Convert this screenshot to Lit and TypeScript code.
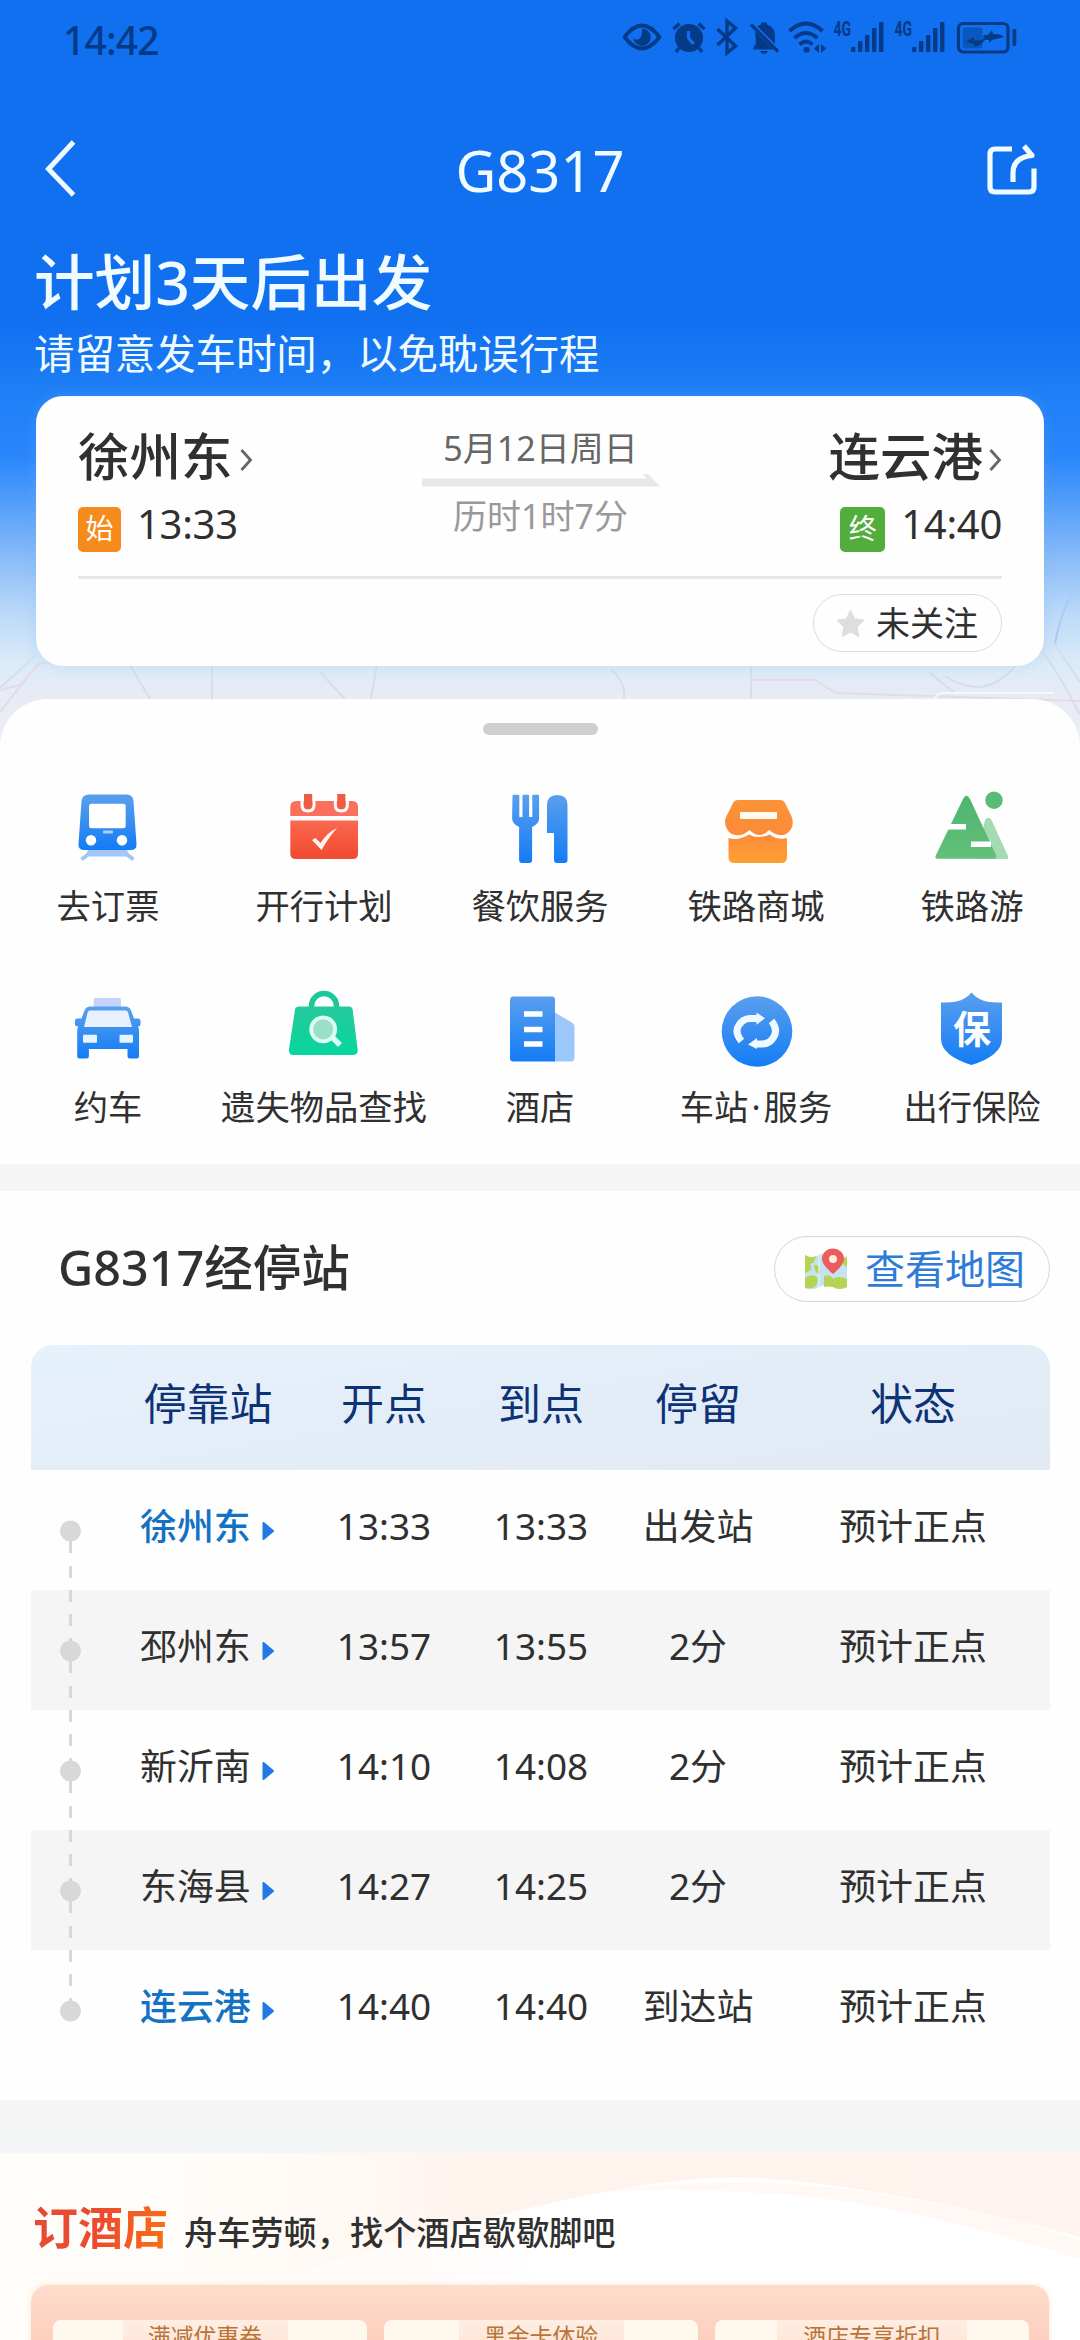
import { LitElement, html, css, svg } from "lit";
import { customElement } from "lit/decorators.js";
import { classMap } from "lit/directives/class-map.js";

interface Stop {
  name: string;
  depart: string;
  arrive: string;
  stay: string;
  status: string;
  terminal?: boolean;
}

const STOPS: Stop[] = [
  { name: "徐州东", depart: "13:33", arrive: "13:33", stay: "出发站", status: "预计正点", terminal: true },
  { name: "邳州东", depart: "13:57", arrive: "13:55", stay: "2分", status: "预计正点" },
  { name: "新沂南", depart: "14:10", arrive: "14:08", stay: "2分", status: "预计正点" },
  { name: "东海县", depart: "14:27", arrive: "14:25", stay: "2分", status: "预计正点" },
  { name: "连云港", depart: "14:40", arrive: "14:40", stay: "到达站", status: "预计正点", terminal: true },
];

const ICONS = {
  train: svg`
    <path d="M92 851.500 L81.500 859.500 M123 851.500 L133.500 859.500" stroke="#a3c6f8" stroke-width="4" fill="none"/>
    <path d="M88 850h39l3 6.500H85z" fill="#a3c6f8"/>
    <path d="M89 794.500h37.500q6.500 0 7 6.500l3 43q.4 6-6 6h-46q-6.500 0-6-6l3-43q.5-6.500 7.500-6.500z" fill="url(#blue)"/>
    <rect x="89" y="803.700" width="36.700" height="24.500" rx="2.500" fill="#fff"/>
    <circle cx="91" cy="840.300" r="5.200" fill="#fff"/><circle cx="122" cy="840.300" r="5.200" fill="#fff"/>
    <rect x="103" y="830.500" width="10" height="3" rx="1" fill="#a9d2fb"/>`,
  calendar: svg`
    <path d="M290.300 816v-9q0-6 6-6h55.700q6 0 6 6v9z" fill="#fb6f5c"/>
    <path d="M290.300 820.500h67.700v33q0 5.500-5.500 5.500h-56.700q-5.500 0-5.500-5.500z" fill="url(#red)"/>
    <path d="M302 798v7q0 6 6 6t6-6v-7M335.300 798v7q0 6 6 6t6-6v-7" fill="none" stroke="#fff" stroke-width="3"/>
    <path d="M304 794h8.200v11q0 4-4 4t-4.200-4zM337.200 794h8.200v11q0 4-4 4t-4.200-4z" fill="#ee5c48"/>
    <path d="M312 840l3.500-2 5 5q6-10 16.500-15-8 9-15.500 22z" fill="#fff3ee"/>`,
  dining: svg`
    <path d="M512.500 796q0-1.200 1.200-1.200h4.400q1.200 0 1.200 1.200v21h3.200v-21q0-1.200 1.200-1.200h4.200q1.200 0 1.200 1.200v21h3.200v-21q0-1.200 1.200-1.200h4.400q1.200 0 1.200 1.200v22q0 6-7 9v33q0 3-3 3h-7q-3 0-3-3v-33q-7-3-7-9z" fill="url(#blue)"/>
    <path d="M547 805.200q0-10.300 10.250-10.300t10.250 10.300v54.800q0 3-3 3h-7.500q-3 0-3-3v-27h-7z" fill="url(#blue)"/>`,
  shop: svg`
    <path d="M738 800h42q3.500 0 5 3l6 12q3.500 8 0 14-4 7-12 6-4-.5-10-5-3.500 4.500-9.500 5-5 0-10-5-5 4.500-9.500 5-9 1.500-13-6-4-7 0-14l6-12q1.500-3 5-3z" fill="url(#orange)"/>
    <rect x="740" y="812" width="37" height="7" rx="1" fill="#fffaf2"/>
    <path d="M728.500 838q10 3 20.500-3.500 9 5 20.500 0 8 6 17.500 3.500v19q0 6-6 6h-46.500q-6 0-6-6z" fill="url(#orange2)"/>`,
  mountain: svg`
    <path d="M985 820q3.500-4.500 6.500 0l16.500 36q1 3-2 3H976z" fill="#a5dbb2"/>
    <path d="M963 799q3.500-6.500 7 0l26 56q1.500 3.800-2 3.800h-56q-4 0-2-3.800z" fill="url(#green)"/>
    <rect x="945" y="824" width="21" height="5.500" fill="#fff"/><rect x="971" y="841.500" width="20" height="5.500" fill="#fff"/>
    <circle cx="994" cy="800.200" r="8.700" fill="#59bb75"/>`,
  car: svg`
    <rect x="93.700" y="998" width="27.300" height="9" rx="1.500" fill="#c4d3fa"/>
    <path d="M75 1021q0-2.500 2.500-2.500h4l3-8q1.500-4 6-4H125q4.500 0 6 4l3 8h4q2.500 0 2.500 2.500v3q0 2.500-2.500 2.500l1 3V1056q0 2.500-2.500 2.500h-6.500q-2.500 0-2.500-2.500v-7H88.900v7q0 2.500-2.500 2.500h-6.700q-2.500 0-2.500-2.500v-26.500l1-3q-3.200 0-3.200-2.500z" fill="url(#blue)"/>
    <path d="M90 1010.500h35.500q2 0 2.600 2l3.900 14.500H84l3.600-14.500q.6-2 2.400-2z" fill="#e8f1fd"/>
    <rect x="83" y="1034.700" width="14" height="8" rx="1" fill="#e6f4fd"/><rect x="119.500" y="1034.700" width="13.500" height="8" rx="1" fill="#e6f4fd"/>`,
  bag: svg`
    <path d="M311.500 1008v-2a12.500 12.500 0 0 1 25 0v2" fill="none" stroke="#1cc89a" stroke-width="5.500"/>
    <path d="M299 1006.500h50q3 0 3.600 3l5 40q.6 5.500-4.600 5.500H293.500q-5 0-4.500-5.500l6-40q.8-3 4-3z" fill="url(#teal)"/>
    <path d="M331 1036l9 9" stroke="#dcfff4" stroke-width="5.500"/>
    <circle cx="323.200" cy="1029.300" r="12" fill="#9be0c6" stroke="#dcfff4" stroke-width="3.800"/>`,
  hotel: svg`
    <path d="M554 1012l17 10q3.500 2 3.500 5v31q0 3.500-3.500 3.500H554z" fill="#9cc7fb"/>
    <path d="M513.500 996.500h38.500q3 0 3 3v62h-41.500q-3.500 0-3.500-3.500v-58q0-3.500 3.500-3.500z" fill="url(#blue)"/>
    <path d="M524 1014h18.500M524 1029.500h18.500M524 1044h18.500" stroke="#fff" stroke-width="5.300"/>`,
  station: svg`
    <circle cx="757" cy="1031.500" r="35.300" fill="url(#blue)"/>
    <path d="M741.500 1041Q734 1032 739 1025q4.500-6.500 11-6.500h8M771.500 1021q6.500 8 2.500 15.500-4 7.500-11.500 7.500h-7" fill="none" stroke="#effaff" stroke-width="7"/>
    <path d="M756.500 1012.500l8.500 5.700-8.500 6.500zM757 1038l-9 6.500 9 4.500z" fill="#effaff"/>`,
  shield: svg`
    <path d="M971.500 992.500q6 7 15 9 5 1 15.500 1v36q0 17-30.500 26.500-30.500-9.500-30.500-26.500v-36q10.500 0 15.500-1 9-2 15-9z" fill="url(#blue)"/>
    <text x="972" y="1043" class="shield-text" text-anchor="middle">保</text>`,
};

const SERVICES: { icon: unknown; label: unknown; x: number; y: number }[] = [
  { icon: ICONS.train, label: "去订票", x: 64, y: 784 },
  { icon: ICONS.calendar, label: "开行计划", x: 280, y: 784 },
  { icon: ICONS.dining, label: "餐饮服务", x: 496, y: 784 },
  { icon: ICONS.shop, label: "铁路商城", x: 712, y: 784 },
  { icon: ICONS.mountain, label: "铁路游", x: 928, y: 784 },
  { icon: ICONS.car, label: "约车", x: 64, y: 985 },
  { icon: ICONS.bag, label: "遗失物品查找", x: 280, y: 985 },
  { icon: ICONS.hotel, label: "酒店", x: 496, y: 985 },
  { icon: ICONS.station, label: html`车站<span class="dot">·</span>服务`, x: 712, y: 985 },
  { icon: ICONS.shield, label: "出行保险", x: 928, y: 985 },
];

const OFFERS = [
  { label: "满减优惠券", tab: 165 },
  { label: "黑金卡体验", tab: 165 },
  { label: "酒店专享折扣", tab: 190 },
];

@customElement("app-root")
export class AppRoot extends LitElement {
  static styles = css`
    :host {
      display: block;
      width: 1080px;
      height: 2340px;
      overflow: hidden;
      background: #fefefe;
      color: #303030;
      font-family: "Noto Sans", "Noto Sans CJK SC", sans-serif;
    }
    * { box-sizing: border-box; }
    svg { display: block; flex: none; }
    .defs { position: absolute; width: 0; height: 0; }
    .hero {
      position: relative;
      height: 745px;
      color: #f0fbff;
      background: linear-gradient(180deg, #1070f0 0, #1070f0 325px, #2080f7 395px, #2986fc 455px, #559ffa 505px, #8bbdf8 560px, #bcdaf9 615px, #dcebf9 665px, #e9ebf4 700px, #edf0f4 745px);
    }
    .map-lines { position: absolute; left: 0; top: 540px; }
    .status { position: relative; display: flex; justify-content: space-between; height: 80px; padding: 0 60px 0 63px; color: #053a86; }
    .clock { font-size: 39px; line-height: 80px; font-weight: 500; letter-spacing: -0.8px; }
    .status-icons { margin-top: 16px; }
    .status-icons text { font: 700 20px/1 "Roboto", sans-serif; fill: #053a86; }
    .nav { position: relative; display: flex; align-items: center; justify-content: space-between; height: 180px; padding: 0 43px; }
    .nav-title { font-size: 56px; line-height: 60px; }
    .headline { position: relative; margin-top: -13px; padding-left: 34px; font-size: 60.600px; line-height: 70px; font-weight: 500; }
    .notice { position: relative; padding-left: 34px; margin-top: 10px; height: 69px; font-size: 40.400px; line-height: 54px; }
    .trip { position: relative; width: 1008px; height: 270px; margin: 0 auto; padding: 0 42px; border-radius: 27px; background: #fefefe; color: #303030; box-shadow: 0 0 14px rgba(120,180,245,.25); }
    .trip-main { display: flex; justify-content: space-between; height: 183px; border-bottom: 3px solid #e7e7e7; padding-top: 30px; }
    .end { display: flex; flex-direction: column; align-items: flex-start; }
    .end.right { align-items: flex-end; }
    .place { display: flex; align-items: center; gap: 7px; font-size: 51.500px; line-height: 60px; font-weight: 500; }
    .right .place { gap: 6px; }
    .place svg { margin-top: 8px; }
    .when { display: flex; gap: 16px; margin-top: 17px; font-size: 40px; line-height: 42px; }
    .when span { letter-spacing: -0.3px; }
    .when b { width: 43px; height: 45px; margin-top: 4px; border-radius: 5px; background: #f58b1c; color: #fff; font-size: 28px; line-height: 43px; font-weight: 400; text-align: center; }
    .when b.final { background: #53ad3d; width: 45px; }
    .mid { display: flex; flex-direction: column; align-items: center; width: 240px; font-size: 34px; line-height: 44px; color: #666; }
    .mid svg { margin: 4px 0 7px; }
    .mid .duration { color: #999; }
    .trip-foot { display: flex; justify-content: flex-end; padding-top: 15px; }
    .follow { display: flex; align-items: center; gap: 11px; width: 189px; height: 58px; padding-left: 22px; border: 1.500px solid #dcdcdc; border-radius: 29px; font-size: 34px; line-height: 54px; }
    .sheet { position: relative; height: 465px; margin-top: -46px; padding-top: 24px; border-radius: 48px 48px 0 0; background: #fefefe; }
    .handle { width: 115px; height: 12px; margin: 0 auto; border-radius: 6px; background: #cfcfcf; }
    .services { display: grid; grid-template-columns: repeat(5, 216px); grid-auto-rows: 201px; margin-top: 49px; }
    .service { display: flex; flex-direction: column; align-items: center; gap: 12px; font-size: 34.300px; line-height: 44px; white-space: nowrap; }
    .dot { padding: 0 3px; }
    .shield-text { font: 700 38px "Noto Sans CJK SC", sans-serif; fill: #fff; }
    .band { height: 27px; background: #f5f5f5; }
    .route { height: 909px; padding: 45px 30px 0 31px; background: #fefefe; }
    .route-head { display: flex; justify-content: space-between; height: 109px; padding-left: 27px; }
    .route-title { margin-top: -1px; font-size: 48.500px; line-height: 64px; font-weight: 500; }
    .map-button { display: flex; align-items: center; gap: 17px; width: 276px; height: 66px; padding-left: 29px; border: 1.500px solid #c3dcf0; border-radius: 33px; color: #2e7cd8; font-size: 40px; line-height: 60px; }
    .row { display: grid; grid-template-columns: 98px 158px 194px 120px 194px 236px; height: 120px; line-height: 112px; font-size: 36.900px; text-align: center; }
    .row:nth-child(odd) { background: #f5f5f5; }
    .row.header { height: 125px; border-radius: 22px 22px 0 0; background: linear-gradient(170deg, #e6f2fb 0%, #e3edf7 50%, #e1e9f5 100%); color: #0d3276; font-size: 43px; line-height: 118px; }
    .name { display: flex; align-items: center; gap: 11px; height: 112px; padding-left: 11px; }
    .name svg { margin-top: 9px; }
    .terminal .name { color: #1472c4; font-weight: 500; }
    .track { width: 79px; }
    .band.tall { height: 53px; background: linear-gradient(180deg, #f5f5f5, #f4f6f7); }
    .hotel { position: relative; height: 187px; padding: 45px 31px 0; background: #fffdf9; }
    .swoosh { position: absolute; left: 0; top: 0; }
    .hotel-head { position: relative; display: flex; align-items: center; gap: 16px; height: 87px; padding: 0 0 28px 2px; }
    .hotel-title { font-size: 45px; line-height: 58px; font-weight: 700; color: transparent; background: linear-gradient(100deg, #e44b35 0%, #ec4b2e 50%, #fa7313 100%); -webkit-background-clip: text; background-clip: text; }
    .hotel-sub { padding-top: 11px; font-size: 33.200px; line-height: 48px; font-weight: 500; }
    .offers { position: relative; display: grid; grid-template-columns: repeat(3, 314px); gap: 17px; height: 80px; padding: 35px 22px 0; border-radius: 17px 17px 0 0; background: linear-gradient(180deg, #fddccb, #fdc9b8); box-shadow: 0 0 6px #fde7d9; }
    .offer { display: flex; justify-content: center; height: 45px; border-radius: 8px 8px 0 0; background: #fff8ed; color: #b87437; font-size: 22.900px; line-height: 33px; }
    .offer:first-child { padding-right: 10px; }
    .offer-tab { text-align: center; background: linear-gradient(180deg, #ffeee3, #fddfce); }
  `;

  private defs() {
    const grad = (id: string, a: string, b: string) => svg`
      <linearGradient id=${id} x1="0" y1="0" x2="0" y2="1"><stop offset="0" stop-color=${a}/><stop offset="1" stop-color=${b}/></linearGradient>`;
    return html`<svg class="defs"><defs>
      ${grad("blue", "#5a9fee", "#137cf5")}
      ${grad("red", "#fb6850", "#f04a30")}
      ${grad("orange", "#fb9338", "#fd8a38")}
      ${grad("orange2", "#fc8b38", "#ffa032")}
      ${grad("green", "#4fb56f", "#63c07a")}
      ${grad("teal", "#27c99c", "#06d69c")}
    </defs></svg>`;
  }

  private statusIcons() {
    const bars = (x: number) => [0, 1, 2, 3, 4].map(
      (i) => svg`<rect x=${x + i * 7} y=${[47, 41, 35, 28, 22][i]} width="4.400" height=${[5, 11, 17, 24, 30][i]} rx="1"/>`,
    );
    return html`<svg class="status-icons" width="400" height="44" viewBox="620 16 400 44" fill="#053a86">
      <path d="M624.500 37Q642 14 659.500 37 642 60 624.500 37z" fill="none" stroke="#053a86" stroke-width="3.800" stroke-linejoin="round"/>
      <path d="M642 28.500a8.700 8.700 0 1 1-8.700 8.700q1.500 3.500 5 2 4.500-2 3.700-10.700z"/>
      <circle cx="689" cy="38" r="14"/><path d="M673.500 29l6-5.500M704.500 29l-6-5.500M679 48l-3 4M699 48l3 4" stroke="#053a86" stroke-width="3.400"/>
      <path d="M688.500 31v7l5 6" stroke="#1070f0" stroke-width="3.200" fill="none"/>
      <path d="M717.500 29l18 17-8.500 7V21l8.500 7-18 17" fill="none" stroke="#053a86" stroke-width="3.400"/>
      <path d="M755 30q1-4 6-5.500v-2h6v2q8 2.500 8 12v8l3 5h-25l1-3 2-3z"/><path d="M760 51h8l-2 2.500h-4z"/>
      <path d="M752.500 25l27 27" stroke="#1070f0" stroke-width="5"/><path d="M751 24.500L778 51.500" stroke="#053a86" stroke-width="3.200"/>
      <path d="M789.500 31q16.500-15 33 0M794.500 38q11.500-10 23 0M799.500 44.500q6.500-6 13 0" fill="none" stroke="#053a86" stroke-width="4"/>
      <rect x="803.500" y="47" width="6" height="5.500" rx="2"/><path d="M819 44v9l-5-4.500zM821 44v9l5-4.500z"/>
      <text x="833.500" y="36" textLength="17.500" lengthAdjust="spacingAndGlyphs">4G</text>${bars(851)}
      <text x="894.500" y="36" textLength="17.500" lengthAdjust="spacingAndGlyphs">4G</text>${bars(912)}
      <rect x="958.500" y="23.500" width="49.500" height="28.500" rx="5" fill="none" stroke="#053a86" stroke-width="3.200"/>
      <rect x="962.500" y="27.500" width="20" height="21" rx="2" opacity=".45"/>
      <rect x="1012.500" y="29" width="3.800" height="17" rx="1.500"/>
      <path d="M966 42l8-5v3.500h7l4-3h-2l1-2.500h4l4-5 1 4 7 .5 4 2.500-12 3-3 3v-3h-4l-5 5-6 2v-3z"/>
    </svg>`;
  }

  private chevron() {
    return html`<svg width="13" height="24" viewBox="0 0 13 24"><path d="M1.500 2l9 10-9 10" fill="none" stroke="#666" stroke-width="2.800"/></svg>`;
  }

  private hero() {
    return html`<header class="hero">
      <svg class="map-lines" width="1080" height="205" viewBox="0 540 1080 205" fill="none" stroke-width="2">
        <path d="M0 688L36 655M0 712l38-48 60-12M130 665l20 34M212 665v34M320 672l25 27M377 665l-6 34M612 670q14 12 12 29M751 665v34" stroke="#d5dfec"/>
        <path d="M751 680h65q10 8 20 13l244 8M0 690l20-5 20-22" stroke="#e6dae4"/>
        <path d="M1080 584q-18 20-25 60" stroke="#a9cbf3"/>
        <path d="M930 672q12 12 24 20M945 676q40 26 70-10l35-28M1040 650q15 15 40 65M1052 640l28 42" stroke="#d5deeb"/>
        <path d="M934 700q2-7 10-7h110" stroke="#f4f8fb"/>
      </svg>
      <div class="status"><span class="clock">14:42</span>${this.statusIcons()}</div>
      <nav class="nav">
        <svg width="52" height="60" viewBox="0 0 52 60"><path d="M30.500 2L5.500 29l25 26" fill="none" stroke="#f0fbff" stroke-width="5"/></svg>
        <span class="nav-title">G8317</span>
        <svg width="52" height="56" viewBox="985 142 52 56" fill="none" stroke="#f0fbff" stroke-width="5.200" stroke-linejoin="round">
          <path d="M1012 149h-17q-5 0-5 5v33q0 5 5 5h34q5 0 5-5v-18.500"/>
          <path d="M1013 182v-9q0-15.500 19-17.500l-8-9.500"/>
        </svg>
      </nav>
      <div class="headline">计划3天后出发</div>
      <div class="notice">请留意发车时间，以免耽误行程</div>
      <section class="trip">
        <div class="trip-main">
          <div class="end">
            <div class="place">徐州东${this.chevron()}</div>
            <div class="when"><b>始</b><span>13:33</span></div>
          </div>
          <div class="mid">
            <span>5月12日周日</span>
            <svg width="238" height="13" viewBox="0 0 238 13"><path d="M0 4.500h224l-3-4.500h5l12 12.500H0z" fill="#e8e8e8"/></svg>
            <span class="duration">历时1时7分</span>
          </div>
          <div class="end right">
            <div class="place">连云港${this.chevron()}</div>
            <div class="when"><b class="final">终</b><span>14:40</span></div>
          </div>
        </div>
        <div class="trip-foot">
          <div class="follow">
            <svg width="29" height="29" viewBox="0 0 29 29"><path d="M14.500 1.500l4 8.500 9 1.200-6.500 6.600 1.500 9.200-8-4.300-8 4.300L8 17.800 1.500 11.200l9-1.200z" fill="#dedede" stroke="#dedede" stroke-width="1.500" stroke-linejoin="round"/></svg>
            未关注
          </div>
        </div>
      </section>
    </header>`;
  }

  private mapIcon() {
    return html`<svg width="44" height="44" viewBox="0 0 44 44">
      <path d="M1 8q7 4 14 0t14 0 14 1v31q-7 4-14 0t-14 0-14 1z" fill="#c4e2ef"/>
      <path d="M1 8q6 4 11 1-1 7-6 8 4 6-5 9zM1 31q8-5 12-1 2 5-2 10-5 2-10 1zM10 18q7-1 6 9-5 0-6-9zM20 29q7-2 9 3 4-4 14 0v8q-8 4-14 0-5-1-9 0zM38 12l5-2v10q-5-2-5-8z" fill="#b5d453"/>
      <path d="M15 8v32" stroke="#ddf0ef" stroke-width="1.500"/>
      <path d="M29 27q-11-9-11-15a11 10.500 0 0 1 22 0q0 6-11 15z" fill="#ef5a5c"/><circle cx="29" cy="12" r="4" fill="#fdebdc"/>
    </svg>`;
  }

  private track(i: number) {
    const last = i === STOPS.length - 1;
    return html`<svg class="track" width="79" height="120" viewBox="0 0 79 120" fill="#d8d8d8">
      ${i > 0 ? svg`<path d="M38 0h3v12h-3zM38 24h3v12h-3zM38 48h3v6h-3z"/>` : null}
      ${last ? null : svg`<path d="M38 70h3v13h-3zM38 96h3v12h-3z"/>`}
      <circle cx="39.500" cy="61" r="10.500"/>
    </svg>`;
  }

  render() {
    return html`${this.defs()}${this.hero()}
      <section class="sheet">
        <div class="handle"></div>
        <div class="services">
          ${SERVICES.map((s) => html`<div class="service">
            <svg width="88" height="88" viewBox="${s.x} ${s.y} 88 88">${s.icon}</svg><span>${s.label}</span>
          </div>`)}
        </div>
      </section>
      <div class="band"></div>
      <section class="route">
        <div class="route-head">
          <span class="route-title">G8317经停站</span>
          <div class="map-button">${this.mapIcon()}<span>查看地图</span></div>
        </div>
        <div class="table">
          <div class="row header"><span></span><span>停靠站</span><span>开点</span><span>到点</span><span>停留</span><span>状态</span></div>
          ${STOPS.map((s, i) => html`<div class=${classMap({ row: true, terminal: !!s.terminal })}>
            ${this.track(i)}
            <span class="name">${s.name}<svg width="13" height="20" viewBox="0 0 13 20"><path d="M1.500 2v16L11 10z" fill="#2079e4" stroke="#2079e4" stroke-width="2" stroke-linejoin="round"/></svg></span>
            <span>${s.depart}</span><span>${s.arrive}</span><span>${s.stay}</span><span>${s.status}</span>
          </div>`)}
        </div>
      </section>
      <div class="band tall"></div>
      <section class="hotel">
        <svg class="swoosh" width="1080" height="187" viewBox="0 0 1080 187">
          <defs>
            <linearGradient id="sw" x1="0" x2="1"><stop offset="0" stop-color="#fff6f1" stop-opacity="0"/><stop offset=".35" stop-color="#fff3ed"/><stop offset="1" stop-color="#fff3ef"/></linearGradient>
            <linearGradient id="sw2" x1="0" x2="1"><stop offset="0" stop-color="#fff" stop-opacity="0"/><stop offset=".4" stop-color="#fff"/><stop offset="1" stop-color="#fff"/></linearGradient>
          </defs>
          <path d="M180 0H1080V187H180z" fill="url(#sw)"/>
          <path d="M250 135Q620 15 760 25 900 35 1080 84V187H180z" fill="url(#sw2)"/>
          <path d="M600 39Q760 18 900 44T1080 88V106Q900 50 790 42T600 39z" fill="#fff8f4"/>
        </svg>
        <div class="hotel-head"><span class="hotel-title">订酒店</span><span class="hotel-sub">舟车劳顿，找个酒店歇歇脚吧</span></div>
        <div class="offers">
          ${OFFERS.map((o) => html`<div class="offer"><span class="offer-tab" style="width:${o.tab}px">${o.label}</span></div>`)}
        </div>
      </section>`;
  }
}
